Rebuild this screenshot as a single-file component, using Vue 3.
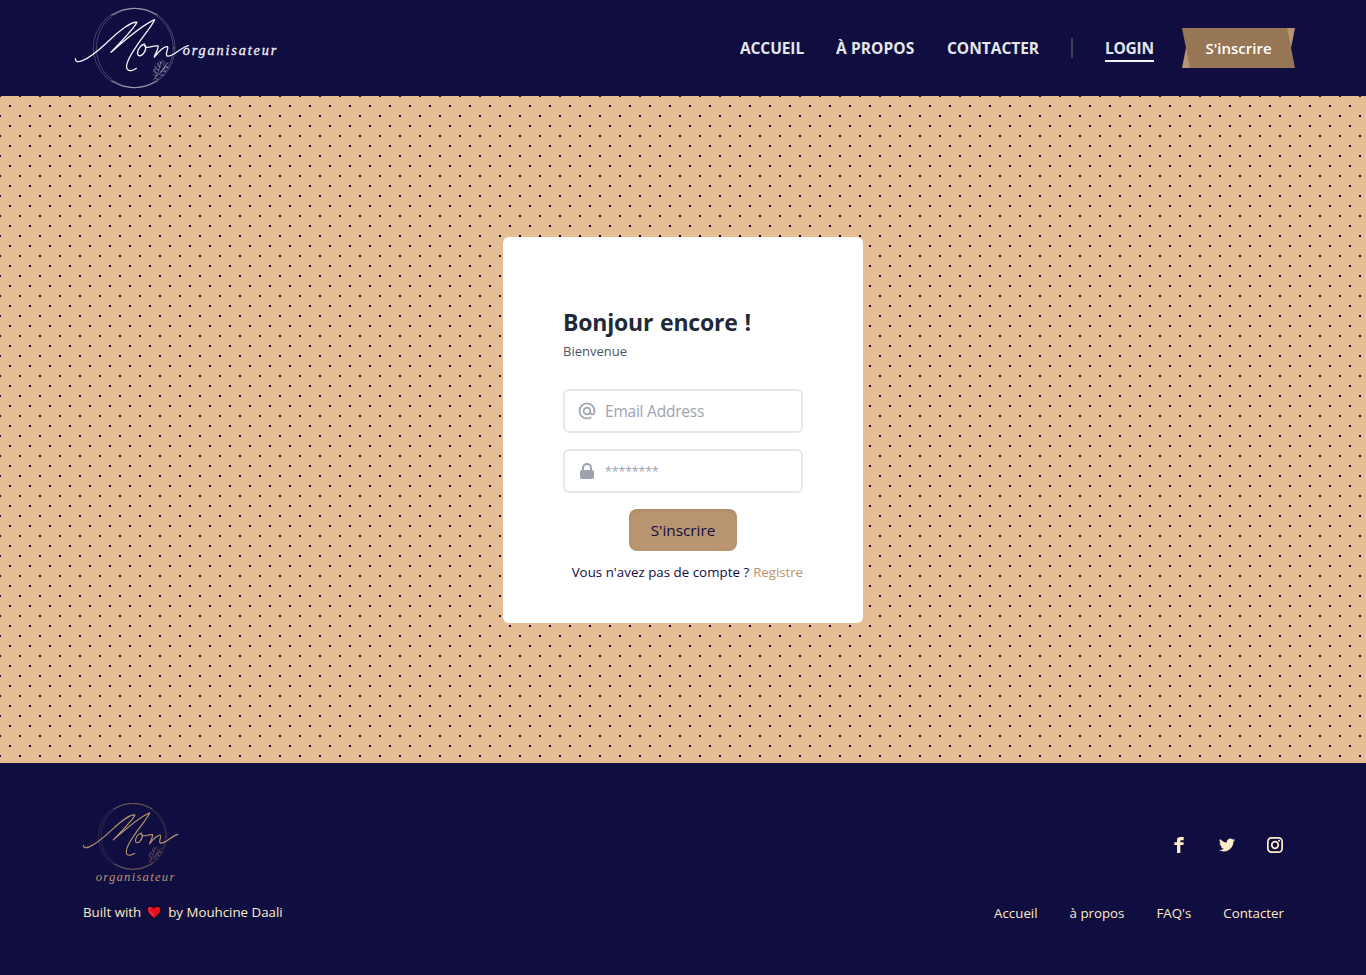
<script setup>
const nav = [
  { label: 'ACCUEIL', cls: 'n1' },
  { label: 'À PROPOS', cls: 'n2' },
  { label: 'CONTACTER', cls: 'n3' },
]
const links = ['Accueil', 'à propos', "FAQ's", 'Contacter']
</script>

<template>
  <div class="page">
    <header class="top">
      <svg class="logo" viewBox="0 0 660 288" fill="none" stroke="currentColor" stroke-linecap="round" stroke-linejoin="round">
        <defs>
          <g id="mon-mark">
            <g stroke-width="2.4">
              <ellipse cx="205" cy="144" rx="120" ry="119.5" stroke-opacity=".3" />
              <ellipse cx="212" cy="144" rx="118" ry="119.5" stroke-opacity=".3" />
              <path d="M140 45Q207 5 277 44M140 243Q207 284 277 243" stroke-opacity=".6" />
            </g>
            <path stroke-width="4" d="M31 176C31 186 40 187 52 182C82 170 108 144 134 120C160 95 200 63 216 67C208 84 166 128 138 157C178 122 226 78 269 59C262 76 232 112 214 139C194 168 179 196 187 208C192 215 205 212 214 205" />
            <path stroke-width="4" d="M238 132C224 136 214 155 219 165C228 174 246 153 241 137C238 130 234 139 246 142C256 143 266 136 279 138C281 146 271 160 268 171C280 155 299 137 307 140C313 144 299 161 306 168C322 174 346 142 370 137" />
            <g stroke-width="2" stroke-opacity=".5">
              <path d="M266 240Q283 219 288 185M273 229Q288 222 306 190M275 220L267 208M280 210L271 200M285 201L279 190M288 192L283 183M287 216L302 213M293 207L309 201M297 200L310 187M283 222L296 227M270 234L280 239" />
              <path d="M267 208l-1 7 9 5M271 200l1 7 8 3M279 190l-1 7 7 4M302 213l-8-5-7 8M309 201l-9-1-7 7M293 181l-4 8M299 184l-4 11M266 223l8 5" />
            </g>
          </g>
        </defs>
        <use href="#mon-mark" />
        <text class="word" x="353" y="166" font-size="43" textLength="281" fill="currentColor" stroke="currentColor" stroke-width=".8">organisateur</text>
      </svg>
      <nav class="nav">
        <a v-for="n in nav" :key="n.label" :class="n.cls">{{ n.label }}</a>
        <span class="divider"></span>
        <a class="login">LOGIN</a>
        <a class="ribbon"><span>S'inscrire</span></a>
      </nav>
    </header>

    <main class="stage">
      <form class="card">
        <h1>Bonjour encore !</h1>
        <p class="sub">Bienvenue</p>
        <div class="field">
          <svg viewBox="0 0 24 24" fill="none" stroke="currentColor" stroke-width="2" stroke-linecap="round" stroke-linejoin="round">
            <path d="M16 12a4 4 0 10-8 0 4 4 0 008 0zm0 0v1.5a2.5 2.5 0 005 0V12a9 9 0 10-9 9m4.5-1.206a8.959 8.959 0 01-4.5 1.207" />
          </svg>
          <span class="email">Email Address</span>
        </div>
        <div class="field">
          <svg viewBox="0 0 20 20" fill="currentColor">
            <path fill-rule="evenodd" d="M5 9V7a5 5 0 0110 0v2a2 2 0 012 2v5a2 2 0 01-2 2H5a2 2 0 01-2-2v-5a2 2 0 012-2zm8-2v2H7V7a3 3 0 016 0z" clip-rule="evenodd" />
          </svg>
          <span class="stars">********</span>
        </div>
        <button type="button" class="submit">S'inscrire</button>
        <p class="ask"><span class="q">Vous n'avez pas de compte ?</span><a>Registre</a></p>
      </form>
    </main>

    <footer class="foot">
      <div class="brand">
        <svg class="logo-small" viewBox="0 0 300 252" fill="none" stroke="currentColor" stroke-linecap="round" stroke-linejoin="round">
          <use href="#mon-mark" transform="translate(-25 -20) scale(.838 .833)" />
          <text class="word" x="38" y="233" font-size="38" textLength="236" fill="currentColor" stroke="none">organisateur</text>
        </svg>
        <p class="built">
          <span>Built with</span>
          <svg viewBox="0 0 16 15">
            <path d="M8 13.5C5 10.8 1.2 7.8 1.2 4.7C1.2 1 6 .1 8 3.2C10 .1 14.8 1 14.8 4.7C14.8 7.8 11 10.8 8 13.5Z" fill="#e81123" stroke="#090613" stroke-width="1" />
            <path d="M3 4.2Q3.3 3 4.5 2.8M3.5 6.3L7.5 10.3" fill="none" stroke="#f5626b" stroke-width=".9" />
          </svg>
          <span>by Mouhcine Daali</span>
        </p>
      </div>
      <div class="side">
        <div class="social">
          <svg viewBox="0 0 24 24" fill="currentColor"><path d="M9 8H5v4h4v12h5V12h4.600L19 8H14V6.300C14 5.300 14.300 5 15.400 5H19V0H14.200C10.600 0 9 1.600 9 4.600Z" /></svg>
          <svg viewBox="0 0 24 24" fill="currentColor"><path d="M24 4.600a10 10 0 01-2.800.8 4.900 4.900 0 002.200-2.700c-1 .6-2 1-3.100 1.200a4.900 4.900 0 00-8.400 4.500C7.700 8.100 4.100 6.100 1.700 3.100a4.900 4.900 0 001.500 6.600c-.8 0-1.600-.2-2.200-.6v.1c0 2.300 1.600 4.400 3.900 4.800-.7.2-1.500.2-2.200.1a4.900 4.900 0 004.600 3.400A9.900 9.900 0 010 19.500a14 14 0 007.500 2.200c9.100 0 14.300-7.700 14-14.600A10 10 0 0024 4.600z" /></svg>
          <svg viewBox="0 0 24 24" fill="none" stroke="currentColor"><rect x="1.300" y="1.300" width="21.400" height="21.400" rx="5.500" stroke-width="2.600" /><circle cx="12" cy="12" r="4.900" stroke-width="2.600" /><circle cx="18.200" cy="5.800" r="1.500" fill="currentColor" stroke="none" /></svg>
        </div>
        <div class="links"><a v-for="l in links" :key="l">{{ l }}</a></div>
      </div>
    </footer>
  </div>
</template>

<style>
body { margin: 0; background: #100d40; }
</style>

<style scoped>
.page { width: 1366px; height: 975px; font-family: "Open Sans", "Noto Sans", sans-serif; color: #100d40; display: flex; flex-direction: column; overflow: hidden; }
.page * { box-sizing: border-box; }
a, span { white-space: nowrap; }
h1, p { margin: 0; }
.top { height: 96px; background: #100d40; display: flex; justify-content: space-between; padding: 0 71px 0 65px; color: #f3f4f6; }
.logo { width: 220px; height: 96px; display: block; color: #f4f3f8; }
.word { font-family: "Liberation Serif", serif; font-style: italic; }
.nav { display: flex; align-items: center; font-size: 15.5px; font-weight: 700; line-height: 24px; color: #e5e7eb; }
.n1 { width: 64px; margin-right: 32px; letter-spacing: -.1px; }
.n2 { width: 79px; margin-right: 32px; letter-spacing: .1px; }
.n3 { width: 92px; margin-right: 32px; letter-spacing: -.02px; }
.divider { width: 2px; height: 20px; background: #374151; margin-right: 32px; }
.login { width: 49px; height: 28px; line-height: 28px; border-bottom: 2px solid #f3f4f6; margin-right: 28px; letter-spacing: -.25px; }
.ribbon { position: relative; width: 113px; height: 40px; display: flex; align-items: center; justify-content: center; color: #fff; font-size: 15px; font-weight: 600; }
.ribbon::before, .ribbon::after { content: ""; position: absolute; inset: 0; }
.ribbon::before { background: #b99470; clip-path: polygon(7% 0, 100% 0, 93% 100%, 0 100%); }
.ribbon::after { background: #967654; clip-path: polygon(0 0, 93% 0, 100% 100%, 7% 100%); }
.ribbon span { position: relative; z-index: 1; }
.stage { height: 667px; display: flex; justify-content: center; align-items: flex-start; padding-top: 141px; background-color: #e6be96; background-image: radial-gradient(#100d40 1px, transparent 1px), radial-gradient(#100d40 1px, transparent 1px); background-size: 20px 20px; background-position: 0 0, 10px 10px; }
.card { width: 360px; height: 386px; background: #fff; border-radius: 6px; padding: 67px 60px 0; display: flex; flex-direction: column; }
h1 { font-size: 23px; line-height: 36px; font-weight: 700; color: #1f2937; letter-spacing: -.2px; word-spacing: 1px; white-space: nowrap; }
.sub { font-size: 13px; line-height: 20px; color: #4b5563; margin: 1px 0 28px; }
.field { width: 240px; height: 44px; flex: none; border: 2px solid #e5e7eb; border-radius: 6px; display: flex; align-items: center; padding-left: 12px; margin-bottom: 16px; color: #9ca3af; }
.field svg { width: 20px; height: 20px; margin-right: 8px; }
.email { font-size: 15.5px; letter-spacing: -.22px; }
.stars { font-size: 12.2px; }
.submit { align-self: center; width: 108px; height: 42px; border: 0; border-radius: 8px; background: #b99470; box-shadow: inset 0 2px 4px rgba(0, 0, 0, .06); color: #100d40; font: 500 15.3px/24px "Open Sans", sans-serif; padding: 0; }
.ask { display: flex; justify-content: flex-end; gap: 4px; margin-top: 11px; font-size: 13.3px; line-height: 20px; }
.ask a { color: #b99470; letter-spacing: -.05px; }
.q { letter-spacing: .03px; }
.foot { height: 212px; background: #100d40; color: #ffecc7; display: flex; justify-content: space-between; padding: 40px 83px 0; font-size: 13.3px; line-height: 20px; }
.logo-small { width: 100px; height: 84px; display: block; color: #b99470; }
.built { display: flex; align-items: center; margin-top: 15px; }
.built svg { width: 16px; height: 15px; margin: 0 6px 0 5px; }
.side { display: flex; flex-direction: column; align-items: flex-end; padding-top: 34px; }
.social { display: flex; gap: 32px; }
.social svg { width: 16px; height: 16px; }
.links { display: flex; gap: 32px; margin: 50px -1px 0 0; }
</style>
